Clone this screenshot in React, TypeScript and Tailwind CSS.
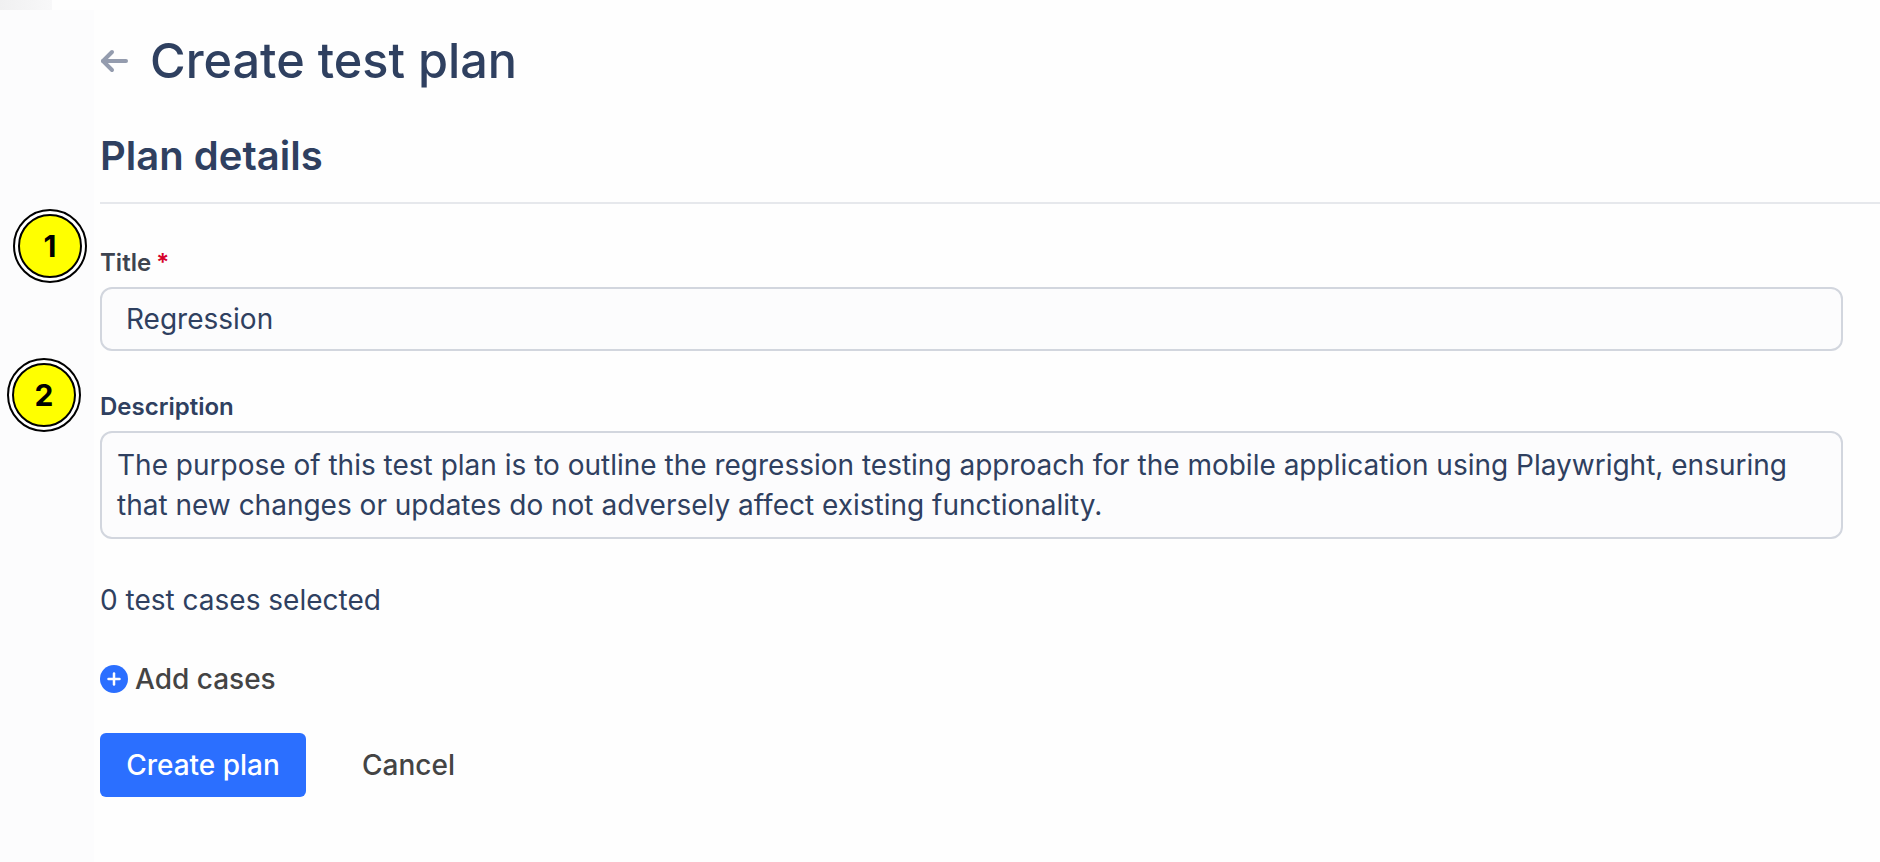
function Marker({ n, className }: { n: number; className: string }) {
  return (
    <div className={`absolute flex h-[74px] w-[74px] items-center justify-center rounded-full border-2 border-black bg-white ${className}`}>
      <div className="flex h-[64px] w-[64px] items-center justify-center rounded-full border-2 border-black bg-[#ffff00] text-[30px] font-bold text-black">
        {n}
      </div>
    </div>
  );
}

export default function App() {
  return (
    <div className="relative flex h-[862px] flex-col overflow-hidden bg-[#fefefe] font-['Inter',sans-serif] text-[#2f4060]">
      <div className="h-[10px] w-[52px] bg-gradient-to-r from-[#f0f0f1] to-[#f8f8f9]" />
      <div className="flex flex-1">
        <div className="w-[94px] shrink-0 bg-[#fcfcfd]" />
        <main className="min-w-0 flex-1 pl-[6px] pt-[21px]">
          <div className="flex h-[60px] items-center gap-[22px]">
            <svg width="28" height="24" viewBox="0 0 28 24" fill="none" stroke="#949cae" strokeWidth="4" strokeLinecap="round" strokeLinejoin="round">
              <path d="M26 12H3" />
              <path d="M12 3L3 12L12 21" />
            </svg>
            <h1 className="text-[48.6px] font-medium leading-[60px]">Create test plan</h1>
          </div>
          <h2 className="mt-[43px] text-[40px] font-semibold leading-[44px]">Plan details</h2>
          <div className="mt-[24px] h-[2px] bg-[#e6e8ec]" />

          <div className="w-[1743px]">
            <label className="mt-[47px] flex h-[24px] items-center gap-[5px] text-[24px] font-semibold leading-[24px] text-[#3d4450]">
              Title <span className="text-[#d6002a]">*</span>
            </label>
            <div className="mt-[12px] flex h-[64px] items-center rounded-[12px] border-2 border-[#d2d6de] bg-[#fcfcfd] pl-[24px] text-[28px]">
              Regression
            </div>

            <label className="mt-[44px] block h-[24px] text-[24px] font-semibold leading-[24px]">Description</label>
            <div className="mt-[12px] h-[108px] rounded-[12px] border-2 border-[#d2d6de] bg-[#fcfcfd] pl-[15px] pr-[16px] pt-[12px] text-[28px] leading-[40px]">
              The purpose of this test plan is to outline the regression testing approach for the mobile application using Playwright, ensuring that new changes or updates do not adversely affect existing functionality.
            </div>
          </div>

          <p className="mt-[43px] text-[28px] leading-[36px]">0 test cases selected</p>

          <button className="mt-[43px] flex h-[36px] items-center gap-[7px] text-[28px] font-medium text-[#444444]">
            <span className="flex h-[28px] w-[28px] items-center justify-center rounded-full bg-[#2b6fff] text-white">
              <svg width="14" height="14" viewBox="0 0 14 14" fill="none" stroke="currentColor" strokeWidth="2.5" strokeLinecap="round">
                <path d="M7 1.5V12.5" />
                <path d="M1.5 7H12.5" />
              </svg>
            </span>
            Add cases
          </button>

          <div className="mt-[36px] flex items-center gap-[56px]">
            <button className="flex h-[64px] w-[206px] items-center justify-center rounded-[6px] bg-[#2b6fff] text-[28px] font-medium text-white">
              Create plan
            </button>
            <button className="text-[28px] font-medium text-[#444444]">Cancel</button>
          </div>
        </main>
      </div>
      <Marker n={1} className="left-[13px] top-[209px]" />
      <Marker n={2} className="left-[7px] top-[358px]" />
    </div>
  );
}
